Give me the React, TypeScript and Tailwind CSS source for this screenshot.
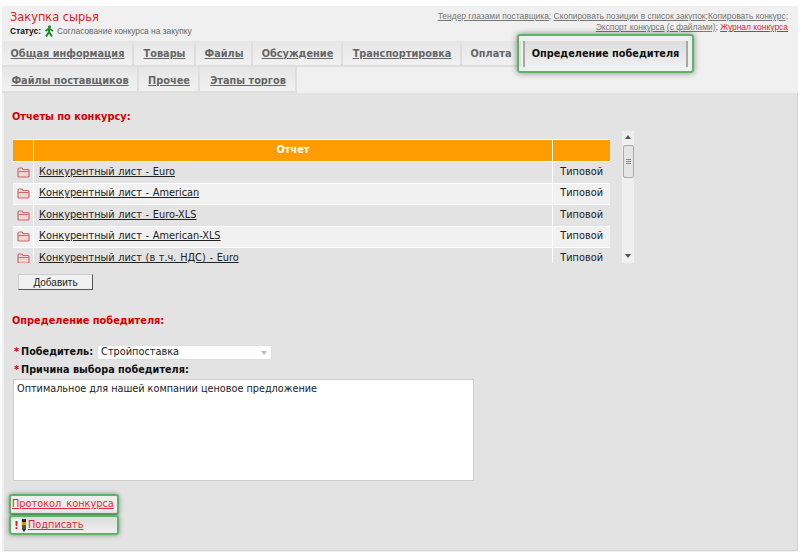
import React from "react";

const dv = "font-['DejaVu_Sans',sans-serif]";
const ls = "font-['Liberation_Sans',Arial,sans-serif]";

function Tab({ label, w, plain, low }: { label: string; w: string; plain?: boolean; low?: boolean }) {
  return (
    <div className={`${w} h-[26px] flex items-center justify-center whitespace-nowrap bg-gradient-to-b from-[#e6e6e6] to-[#f1f1f1] border-r-2 border-b-2 border-[#dedede] pl-[1px] text-[9.75px] font-bold text-[#666] ${low ? "pt-[5px]" : "pt-[2px]"} ${plain ? "" : "underline"}`}>
      {label}
    </div>
  );
}

function FolderIcon() {
  return (
    <svg width="13" height="11" viewBox="0 0 13 11" className="shrink-0">
      <path d="M1 2.2 Q1 1 2 1 H5 L6 2.5 H11 Q12 2.5 12 3.5 V9 Q12 10 11 10 H2 Q1 10 1 9 Z" fill="#f0d5d5" stroke="#cc6a6a" strokeWidth="1.2" />
      <path d="M1.5 4.5 H11.5" stroke="#cc6a6a" strokeWidth="1" />
    </svg>
  );
}

function Row({ name, alt }: { name: string; alt: boolean }) {
  return (
    <div className={`flex h-[21.5px] shrink-0 border-b border-white ${alt ? "bg-[#f1f1f1]" : "bg-[#e3e3e3]"} text-[9.75px] text-[#222]`}>
      <div className="w-[21px] flex items-center justify-center border-r border-white"><FolderIcon /></div>
      <div className="w-[519px] flex items-center pl-[5px] border-r border-white underline [word-spacing:0.6px]">{name}</div>
      <div className="flex-1 flex items-center justify-end pr-[7px]">Типовой</div>
    </div>
  );
}

export default function App() {
  return (
    <div className={`w-[800px] h-[553px] bg-white pt-[6px] ${dv} overflow-hidden`}>
      <div className="mx-[2px] bg-[#f0f0f0] pb-[1px]">
        <div className="h-[34px] flex justify-between pl-[8px] pr-[10px] pt-[5px]">
          <div>
            <div className="text-[11.4px] leading-[13px] text-[#dd2222]">Закупка сырья</div>
            <div className={`${ls} flex items-center text-[8.4px] leading-[11px] mt-[1px] text-[#666]`}>
              <b className="text-[#111]">Статус:</b>
              <svg width="10" height="12" viewBox="0 0 10 12" className="mx-[3px]">
                <circle cx="5.5" cy="1.8" r="1.6" fill="#1f8a2a" />
                <path d="M5 3.5 L1.5 6 M5 3.5 L9 6 M5 3.5 L5 7 L2 11.5 M5 7 L8 11.5" stroke="#1f8a2a" strokeWidth="2" fill="none" />
              </svg>
              Согласование конкурса на закупку
            </div>
          </div>
          <div className={`${ls} text-[8.45px] leading-[11px] text-right text-[#777]`}>
            <div><span className="underline">Тендер глазами поставщика</span>; <span className="underline">Скопировать позиции в список закупок</span>;<span className="underline">Копировать конкурс</span>;</div>
            <div><span className="underline">Экспорт конкурса</span> <span className="underline">(с файлами)</span>; <span className="underline text-[#e32636]">Журнал конкурса</span></div>
          </div>
        </div>

        <div className="h-[53px] pt-[1px]">
          <div className="flex">
            <Tab label="Общая информация" w="w-[132px]" />
            <Tab label="Товары" w="w-[62px]" />
            <Tab label="Файлы" w="w-[57px]" />
            <Tab label="Обсуждение" w="w-[90px]" />
            <Tab label="Транспортировка" w="w-[119px]" />
            <Tab label="Оплата" w="w-[59px]" plain />
            <div className="relative ml-[2px] w-[165px] h-[26px] flex items-center justify-center whitespace-nowrap text-[9.75px] font-bold text-[#111] bg-gradient-to-b from-[#dcdcdc] to-[#f0f0f0] border-l-2 border-r-2 border-[#a8a8a8]">
              <div className="absolute -left-[8px] -right-[8px] -top-[7px] -bottom-[6px] rounded-[3px] border-2 border-[#5cb566] shadow-[0_0_6px_rgba(0,0,0,0.45)] pointer-events-none" />
              <span className="relative">Определение победителя</span>
            </div>
          </div>
          <div className="flex">
            <Tab label="Файлы поставщиков" w="w-[137px]" low />
            <Tab label="Прочее" w="w-[61px]" low />
            <Tab label="Этапы торгов" w="w-[97px]" low />
          </div>
        </div>

        <div className="bg-[#e3e3e3] ml-[2px] h-[458px] pl-[8px] pt-[17px] border-r border-b border-[#d4d4d4]">
          <div className="text-[9.8px] leading-[13px] font-bold text-[#d40000]">Отчеты по конкурсу:</div>

          <div className="flex mt-[8px] h-[132px]">
            <div className="w-[597px] ml-[1px] h-[124px] mt-[8px] overflow-hidden flex flex-col border-t border-white">
              <div className="flex h-[22px] shrink-0 bg-[#ff9c00] border-b border-white text-white text-[9.75px] font-bold">
                <div className="w-[21px] border-r border-white" />
                <div className="w-[519px] flex items-center justify-center border-r border-white">Отчет</div>
                <div className="flex-1" />
              </div>
              <Row name="Конкурентный лист - Euro" alt={false} />
              <Row name="Конкурентный лист - American" alt />
              <Row name="Конкурентный лист - Euro-XLS" alt={false} />
              <Row name="Конкурентный лист - American-XLS" alt />
              <Row name="Конкурентный лист (в т.ч. НДС) - Euro" alt={false} />
            </div>
            <div className="ml-[12px] w-[12px] bg-[#efefef] flex flex-col items-center">
              <div className="mt-[4px] w-0 h-0 border-l-[3px] border-r-[3px] border-b-[4px] border-transparent border-b-[#555]" />
              <div className="mt-[6px] w-[11px] h-[33px] rounded-[2px] bg-[#e4e4e4] border border-[#aaa] flex flex-col items-center justify-center gap-[1px]">
                <div className="w-[5px] h-px bg-[#888]" />
                <div className="w-[5px] h-px bg-[#888]" />
                <div className="w-[5px] h-px bg-[#888]" />
              </div>
              <div className="mt-auto mb-[5px] w-0 h-0 border-l-[3px] border-r-[3px] border-t-[4px] border-transparent border-t-[#555]" />
            </div>
          </div>

          <div className={`${ls} mt-[11px] ml-[6px] w-[75px] h-[16px] flex items-center justify-center bg-[#f1f1f1] border border-[#555] border-t-[#ccc] border-l-[#ccc] text-[10px] text-[#222]`}>Добавить</div>

          <div className="mt-[24px] text-[9.8px] leading-[13px] font-bold text-[#d40000]">Определение победителя:</div>

          <div className="mt-[18px] ml-[2px] flex items-center h-[15px] text-[9.7px] font-bold text-[#111]">
            <span className="text-[#d40000] mr-[2px]">*</span>Победитель:
            <div className="ml-[4px] w-[175px] h-[15px] bg-white border border-[#ddd] flex items-center justify-between pl-[3px] pr-[4px] text-[9.75px] font-normal text-[#222]">
              Стройпоставка
              <div className="w-0 h-0 border-l-[3.5px] border-r-[3.5px] border-t-[4px] border-transparent border-t-[#bbb]" />
            </div>
          </div>
          <div className="mt-[4px] ml-[2px] h-[13px] flex items-center text-[9.7px] font-bold text-[#111]">
            <span className="text-[#d40000] mr-[2px]">*</span>Причина выбора победителя:
          </div>
          <div className="mt-[2px] ml-[1px] w-[461px] h-[102px] bg-white border border-[#ccc] pl-[3px] pt-[2px] text-[9.7px] leading-[13px] text-[#222]">
            Оптимальное для нашей компании ценовое предложение
          </div>

          <div className="mt-[13px] -ml-[3px] w-[110px] h-[21px] flex items-center pl-[1px] bg-[#efefef] border-2 border-[#5cb566] rounded-[3px] shadow-[0_0_5px_rgba(0,0,0,0.4)] text-[9.75px] text-[#e32636] underline whitespace-nowrap [word-spacing:2px]">Протокол конкурса</div>
          <div className="-ml-[3px] w-[110px] h-[20px] pt-[1px] flex items-center pl-[1px] bg-gradient-to-b from-[#dcdcdc] to-[#f0f0f0] border-2 border-[#5cb566] rounded-[3px] shadow-[0_0_5px_rgba(0,0,0,0.4)] text-[9.75px] text-[#e32636]">
            <div className="w-[9px] h-[13px] bg-[#f4f4f4] text-[#e0162b] text-[11px] font-bold leading-[13px] text-center">!</div>
            <svg width="6" height="13" viewBox="0 0 6 13" className="mr-[1px]">
              <rect x="1" y="0" width="4" height="3" fill="#222" />
              <rect x="1" y="3" width="4" height="3" fill="#c49a2a" />
              <rect x="1" y="6" width="4" height="4" fill="#4a5a3a" />
              <path d="M1 10 H5 L3 13 Z" fill="#222" />
            </svg>
            <span className="underline">Подписать</span>
          </div>
        </div>
      </div>
    </div>
  );
}
